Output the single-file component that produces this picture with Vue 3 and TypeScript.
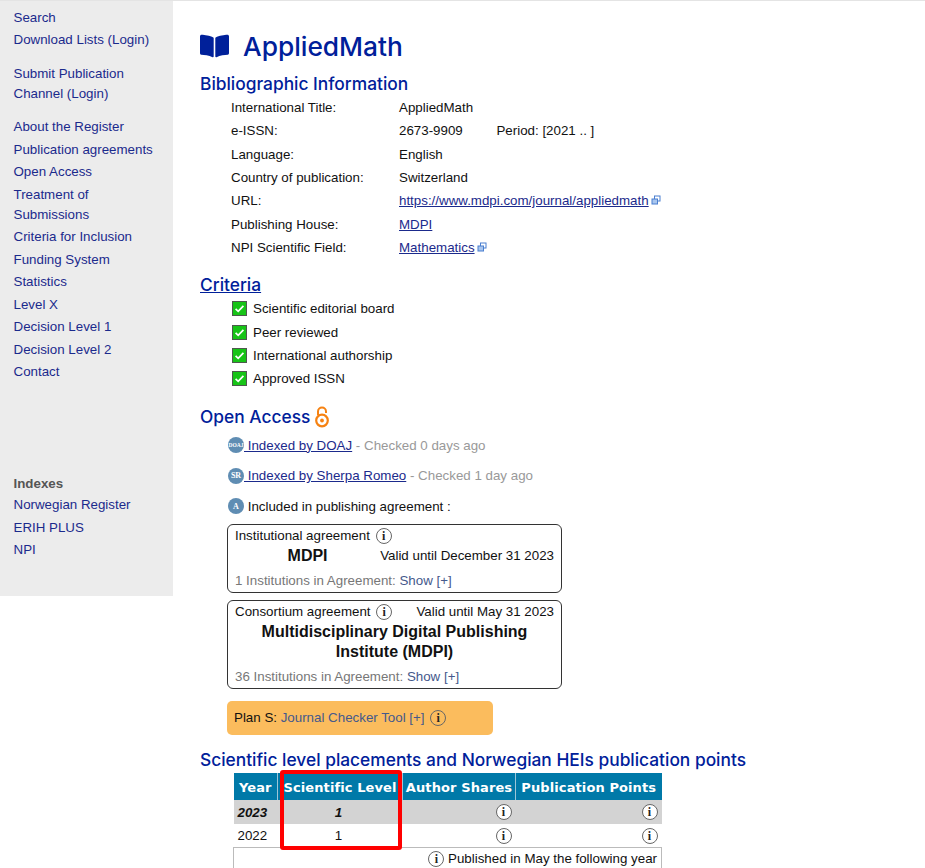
<script setup lang="ts">
const navGroups: string[][] = [
  ['Search', 'Download Lists (Login)'],
  ['Submit Publication Channel (Login)'],
  [
    'About the Register',
    'Publication agreements',
    'Open Access',
    'Treatment of Submissions',
    'Criteria for Inclusion',
    'Funding System',
    'Statistics',
    'Level X',
    'Decision Level 1',
    'Decision Level 2',
    'Contact',
  ],
]
const indexes = ['Norwegian Register', 'ERIH PLUS', 'NPI']
const criteria = ['Scientific editorial board', 'Peer reviewed', 'International authorship', 'Approved ISSN']
const years = [
  { year: '2023', level: '1', current: true },
  { year: '2022', level: '1', current: false },
]
</script>

<template>
  <div class="page">
    <aside class="sidebar">
      <ul v-for="(group, i) in navGroups" :key="i" class="nav-group">
        <li v-for="item in group" :key="item"><a href="#">{{ item }}</a></li>
      </ul>
      <div class="nav-title">Indexes</div>
      <ul class="nav-group">
        <li v-for="item in indexes" :key="item"><a href="#">{{ item }}</a></li>
      </ul>
    </aside>

    <main class="content">
      <h1 class="title">
        <svg class="book" viewBox="0 0 576 512" aria-hidden="true">
          <path d="M542.22 32.05c-54.8 3.11-163.72 14.43-230.96 55.59-4.64 2.84-7.27 7.89-7.27 13.17v363.87c0 11.55 12.63 18.85 23.28 13.49 69.18-34.82 169.23-44.32 218.7-46.92 16.89-.89 30.02-14.43 30.02-30.66V62.75c.01-17.71-15.35-31.74-33.77-30.7zM264.73 87.64C197.5 46.48 88.58 35.17 33.78 32.05 15.36 31.01 0 45.04 0 62.75V400.6c0 16.24 13.13 29.78 30.02 30.66 49.49 2.6 149.59 12.11 218.77 46.95 10.62 5.35 23.21-1.94 23.21-13.46V100.63c0-5.29-2.62-10.14-7.27-12.99z" />
        </svg>
        AppliedMath
      </h1>

      <h2 class="heading bib">Bibliographic Information</h2>
      <div class="info-grid">
        <span>International Title:</span><span>AppliedMath</span>
        <span>e-ISSN:</span><span>2673-9909 <span class="period">Period: [2021 .. ]</span></span>
        <span>Language:</span><span>English</span>
        <span>Country of publication:</span><span>Switzerland</span>
        <span>URL:</span>
        <span><a href="#">https://www.mdpi.com/journal/appliedmath</a>
          <svg class="ext" viewBox="0 0 10 10" aria-hidden="true">
            <rect x="3.5" y="1" width="5.5" height="5" fill="#fff" stroke="#4a7fd0" />
            <rect x="1" y="4" width="5.5" height="5" fill="#a9c6ee" stroke="#4a7fd0" />
          </svg>
        </span>
        <span>Publishing House:</span><span><a href="#">MDPI</a></span>
        <span>NPI Scientific Field:</span>
        <span><a href="#">Mathematics</a>
          <svg class="ext" viewBox="0 0 10 10" aria-hidden="true">
            <rect x="3.5" y="1" width="5.5" height="5" fill="#fff" stroke="#4a7fd0" />
            <rect x="1" y="4" width="5.5" height="5" fill="#a9c6ee" stroke="#4a7fd0" />
          </svg>
        </span>
      </div>

      <h2 class="heading criteria"><a href="#">Criteria</a></h2>
      <ul class="checks">
        <li v-for="c in criteria" :key="c">
          <svg class="check" viewBox="0 0 15 15" aria-hidden="true">
            <rect x="0.5" y="0.5" width="14" height="14" fill="#17c417" stroke="#4d5a4d" />
            <path d="M3.6 7.8l2.6 2.5L11.4 4.8" fill="none" stroke="#fff" stroke-width="1.7" />
          </svg>
          {{ c }}
        </li>
      </ul>

      <h2 class="heading oa">
        Open Access
        <svg class="oa-icon" viewBox="0 0 14 22" aria-hidden="true">
          <path d="M3 9V5.5a4 4 0 0 1 8 0V7" fill="none" stroke="#f68212" stroke-width="2" />
          <circle cx="7" cy="14.5" r="5.8" fill="none" stroke="#f68212" stroke-width="2.2" />
          <circle cx="7" cy="14.5" r="1.9" fill="#f68212" />
        </svg>
      </h2>
      <div class="oa-list">
        <div class="oa-row">
          <span class="badge tiny">DOAJ</span><a href="#">&nbsp;Indexed by DOAJ</a>
          <span class="muted">&nbsp;- Checked 0 days ago</span>
        </div>
        <div class="oa-row">
          <span class="badge">SR</span><a href="#">&nbsp;Indexed by Sherpa Romeo</a>
          <span class="muted">&nbsp;- Checked 1 day ago</span>
        </div>
        <div class="oa-row">
          <span class="badge">A</span>&nbsp;Included in publishing agreement :
        </div>
      </div>

      <section class="agreement first">
        <div class="line">Institutional agreement <span class="info">i</span></div>
        <div class="line spread">
          <strong class="agreement-name">MDPI</strong>
          <span>Valid until December 31 2023</span>
        </div>
        <div class="line foot">1 Institutions in Agreement: <a href="#">Show [+]</a></div>
      </section>

      <section class="agreement second">
        <div class="line spread">
          <span>Consortium agreement <span class="info">i</span></span>
          <span>Valid until May 31 2023</span>
        </div>
        <strong class="agreement-full">Multidisciplinary Digital Publishing Institute (MDPI)</strong>
        <div class="line foot">36 Institutions in Agreement: <a href="#">Show [+]</a></div>
      </section>

      <div class="plan">Plan S: <a href="#">Journal Checker Tool [+]</a> <span class="info">i</span></div>

      <h2 class="heading levels">Scientific level placements and Norwegian HEIs publication points</h2>
      <div class="table-wrap">
        <table class="levels-table">
          <colgroup>
            <col class="c1" /><col class="c2" /><col class="c3" /><col class="c4" />
          </colgroup>
          <thead>
            <tr><th>Year</th><th>Scientific Level</th><th>Author Shares</th><th>Publication Points</th></tr>
          </thead>
          <tbody>
            <tr v-for="y in years" :key="y.year" :class="{ current: y.current }">
              <td>{{ y.year }}</td>
              <td class="center">{{ y.level }}</td>
              <td class="right"><span class="info">i</span></td>
              <td class="right"><span class="info">i</span></td>
            </tr>
            <tr class="note">
              <td colspan="4"><span class="info">i</span> Published in May the following year</td>
            </tr>
          </tbody>
        </table>
        <div class="highlight"></div>
      </div>
    </main>
  </div>
</template>

<style>
html,
body {
  overflow: hidden;
  background: #fff;
}
</style>

<style scoped>
.page {
  display: flex;
  align-items: flex-start;
  border-top: 1px solid #e4e4e4;
  font-family: 'Liberation Sans', Arial, sans-serif;
  font-size: 13.33px;
  color: #111;
}

a {
  color: #1b2a8c;
}

.sidebar {
  flex: 0 0 173px;
  box-sizing: border-box;
  height: 595px;
  padding: 6.8px 13.5px 0;
  background: #ececec;
}

.nav-group {
  list-style: none;
  margin: 0 0 13.5px;
  padding: 0;
}

.nav-group li {
  line-height: 20px;
  margin-bottom: 2.5px;
}

.nav-group a {
  text-decoration: none;
}

.nav-title {
  margin-top: 92.2px;
  margin-bottom: 1px;
  font-weight: bold;
  line-height: 20px;
  color: #555;
}

.content {
  flex: 1;
  min-width: 0;
  padding: 27px 0 0 27px;
}

.title {
  display: flex;
  align-items: center;
  height: 36px;
  margin: 0;
  font-family: Inter, 'Noto Sans', sans-serif;
  font-size: 26.3px;
  font-weight: 500;
  color: #00209a;
}

.book {
  width: 29px;
  height: 26px;
  margin-right: 14px;
  fill: #00209a;
}

.heading {
  height: 24px;
  margin: 0;
  font-family: Inter, 'Noto Sans', sans-serif;
  font-size: 17.35px;
  font-weight: 500;
  line-height: 24px;
  color: #00209a;
}

.heading a {
  color: #00209a;
}

.bib {
  margin-top: 8px;
}

.criteria {
  margin-top: 14px;
}

.oa {
  display: flex;
  align-items: center;
  gap: 5px;
  margin-top: 15px;
}

.levels {
  margin-top: 13px;
  white-space: nowrap;
}

.info-grid {
  display: grid;
  grid-template-columns: 168px 1fr;
  grid-auto-rows: 23.3px;
  align-items: center;
  padding-left: 31px;
}

.period {
  margin-left: 30px;
}

.ext {
  width: 10px;
  height: 10px;
  margin-left: 2px;
}

.checks {
  list-style: none;
  margin: 0;
  padding: 0 0 0 32px;
}

.checks li {
  display: flex;
  align-items: center;
  gap: 6px;
  height: 23.3px;
}

.check {
  width: 15px;
  height: 15px;
}

.oa-icon {
  width: 14px;
  height: 22px;
}

.oa-list {
  margin-top: 0.5px;
}

.oa-row {
  display: flex;
  align-items: center;
  height: 30.5px;
  padding-left: 28px;
  white-space: pre;
}

.badge {
  display: inline-flex;
  align-items: center;
  justify-content: center;
  width: 16px;
  height: 16px;
  border-radius: 50%;
  background: #5f8db3;
  color: #fff;
  font-family: 'Liberation Serif', serif;
  font-size: 8px;
  font-weight: bold;
}

.badge.tiny {
  font-size: 5.5px;
}

.muted {
  color: #999;
}

.agreement {
  box-sizing: border-box;
  width: 335px;
  margin-left: 27px;
  padding: 0 7px;
  border: 1px solid #333;
  border-radius: 6px;
}

.first {
  height: 69px;
  margin-top: 3px;
  padding-top: 1px;
}

.second {
  height: 89px;
  margin-top: 7px;
  padding-top: 1px;
}

.line {
  line-height: 20px;
}

.spread {
  display: flex;
  justify-content: space-between;
}

.agreement-name {
  flex: 1;
  font-size: 16px;
  text-align: center;
}

.agreement-full {
  display: block;
  font-size: 16px;
  line-height: 20px;
  text-align: center;
}

.foot {
  margin-top: 5px;
  color: #777;
}

.foot a,
.plan a {
  color: #45598c;
  text-decoration: none;
}

.info {
  display: inline-flex;
  align-items: center;
  justify-content: center;
  box-sizing: border-box;
  width: 16px;
  height: 16px;
  margin-left: 2px;
  border: 1px solid #666;
  border-radius: 50%;
  background: #fff;
  font-family: 'Liberation Serif', serif;
  font-size: 12px;
  font-style: normal;
  font-weight: bold;
  line-height: 1;
  color: #222;
}

.plan {
  box-sizing: border-box;
  width: 266px;
  height: 34px;
  margin: 12px 0 0 27px;
  padding: 0 7px;
  border-radius: 5px;
  background: #fbbc5d;
  line-height: 33px;
}

.plan .info {
  background: transparent;
}

.table-wrap {
  position: relative;
  width: 428px;
  margin: 1px 0 0 33px;
}

.levels-table {
  width: 428px;
  table-layout: fixed;
  border-collapse: collapse;
}

.c1 {
  width: 44px;
}

.c2 {
  width: 125px;
}

.c3 {
  width: 113px;
}

.c4 {
  width: 146px;
}

th {
  height: 27px;
  padding: 1px 0 0;
  box-sizing: border-box;
  background: #0079a8;
  border-left: 1px solid #9cc6d8;
  font-family: 'DejaVu Sans', Verdana, sans-serif;
  font-size: 13px;
  letter-spacing: 0.1px;
  color: #fff;
  white-space: nowrap;
}

th:first-child {
  border-left: none;
}

td {
  height: 24px;
  padding: 0 4px;
  box-sizing: border-box;
}

tbody tr {
  background: #fff;
}

tbody tr:nth-child(2) td {
  height: 23px;
}

tr.current {
  background: #d3d3d3;
  font-style: italic;
  font-weight: bold;
}

.center {
  padding-right: 7px;
  text-align: center;
}

.right {
  text-align: right;
}

.note td {
  height: 24px;
  border: 1px solid #bbb;
  text-align: right;
}

.highlight {
  position: absolute;
  top: -3px;
  left: 47px;
  width: 122px;
  height: 80px;
  box-sizing: border-box;
  border: 4px solid #f00;
  border-radius: 3px;
  pointer-events: none;
}
</style>
